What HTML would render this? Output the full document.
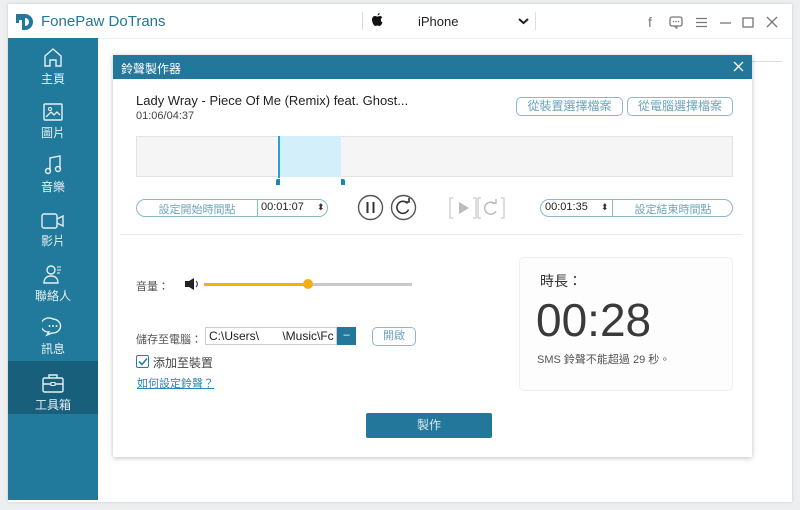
<!DOCTYPE html>
<html><head><meta charset="utf-8"><style>
*{margin:0;padding:0;box-sizing:border-box}
body{width:800px;height:510px;background:#eceef0;font-family:"Liberation Sans","Noto Sans CJK TC",sans-serif;position:relative;overflow:hidden;color:#333}
.a{position:absolute}
#win{left:8px;top:4px;width:784px;height:498px;background:#fff;box-shadow:0 0 3px rgba(0,0,0,.15)}
#side{left:8px;top:38px;width:90px;height:462px;background:#217a9b}
.nav{position:absolute;left:0;width:90px;text-align:center;color:#e6f0f4;font-size:12px}
.nav svg{display:block;margin:0 auto 2px}
#dlg{left:113px;top:55px;width:639px;height:402px;background:#fff;box-shadow:0 1px 5px rgba(0,0,0,.25)}
.btn{position:absolute;border:1.5px solid #8ab8cc;border-radius:5px;color:#6fa3bb;font-size:12px;text-align:center;background:#fff}
.tf{position:absolute;border:1.5px solid #8ab8cc;border-radius:9px;height:18px;font-size:12px;background:#fff}
</style></head><body>
<div id="win" class="a"></div>
<svg class="a" style="left:15px;top:12px" width="20" height="20" viewBox="0 0 20 20"><path d="M1 2h9a8 8 0 0 1 0 16H7V8H4v3H1z" fill="#23779a"/><path d="M10 6a4 4 0 0 1 0 8z" fill="#fff"/></svg>
<div class="a" style="left:41px;top:13px;font-size:15px;color:#23779a">FonePaw DoTrans</div>
<div class="a" style="left:362px;top:12px;width:1px;height:18px;background:#ddd"></div>
<svg class="a" style="left:372px;top:13px" width="11" height="13" viewBox="0 0 11 13"><path d="M8 3c-1 0-1.8.6-2.5.6S4 3 3 3C1.5 3 0 4.3 0 6.8 0 9.5 2 13 3.2 13c.8 0 1.2-.5 2.2-.5s1.3.5 2.2.5C8.8 13 10 10.6 10.5 9.5 9.4 9 8.8 8 8.8 6.8c0-1 .6-1.8 1.4-2.3C9.600 3.400 8.800 3 8 3zM7.600 0c.1 1-.8 2.400-2 2.300C5.500 1.200 6.500.1 7.600 0z" fill="#111"/></svg>
<div class="a" style="left:418px;top:14px;font-size:13px;color:#222">iPhone</div>
<svg class="a" style="left:518px;top:18px" width="11" height="7"><path d="M1 1l4.5 4 4.5-4" stroke="#222" stroke-width="2" fill="none"/></svg>
<div class="a" style="left:535px;top:12px;width:1px;height:18px;background:#ddd"></div>
<div class="a" style="left:648px;top:14px;font-size:14px;color:#777">f</div>
<svg class="a" style="left:669px;top:16px" width="14" height="13"><rect x="1" y="1" width="12" height="9" rx="2" stroke="#777" fill="none" stroke-width="1.3"/><path d="M5 10l3 2.5V10" stroke="#777" fill="none"/><circle cx="4.5" cy="5.5" r=".8" fill="#777"/><circle cx="7" cy="5.5" r=".8" fill="#777"/><circle cx="9.5" cy="5.5" r=".8" fill="#777"/></svg>
<svg class="a" style="left:695px;top:17px" width="13" height="11"><path d="M1 1.5h11M1 5.5h11M1 9.5h11" stroke="#777" stroke-width="1.3"/></svg>
<svg class="a" style="left:719px;top:17px" width="13" height="11"><path d="M1 6h11" stroke="#777" stroke-width="1.3"/></svg>
<svg class="a" style="left:742px;top:17px" width="12" height="11"><rect x="1" y="1" width="10" height="9" stroke="#777" fill="none" stroke-width="1.3"/></svg>
<svg class="a" style="left:766px;top:16px" width="12" height="12"><path d="M1 1l10 10M11 1L1 11" stroke="#777" stroke-width="1.3"/></svg>
<div class="a" style="left:98px;top:38px;width:694px;height:1px;background:#eee"></div>
<div class="a" style="left:752px;top:61px;width:30px;height:1px;background:#ddd"></div>
<div id="side" class="a">
 <div class="nav" style="top:8px"><svg width="22" height="22" viewBox="0 0 22 22"><path d="M3 10L11 3l8 7v10h-5v-6H8v6H3z" stroke="#e6f0f4" stroke-width="1.4" fill="none"/></svg>主頁</div>
 <div class="nav" style="top:64px"><svg width="22" height="20" viewBox="0 0 22 20"><rect x="2" y="2" width="18" height="16" rx="1" stroke="#e6f0f4" stroke-width="1.4" fill="none"/><path d="M4 15l5-5 3 3 3-3 3 3" stroke="#e6f0f4" fill="none" stroke-width="1.3"/><circle cx="8" cy="7" r="1.5" stroke="#e6f0f4" fill="none"/></svg>圖片</div>
 <div class="nav" style="top:116px"><svg width="22" height="22" viewBox="0 0 22 22"><path d="M8 17V4l10-2v13" stroke="#e6f0f4" stroke-width="1.4" fill="none"/><circle cx="6" cy="17" r="2.5" stroke="#e6f0f4" stroke-width="1.4" fill="none"/><circle cx="16" cy="15" r="2.5" stroke="#e6f0f4" stroke-width="1.4" fill="none"/></svg>音樂</div>
 <div class="nav" style="top:174px"><svg width="26" height="18" viewBox="0 0 26 18"><rect x="2" y="2" width="15" height="14" rx="2" stroke="#e6f0f4" stroke-width="1.4" fill="none"/><path d="M17 7l6-3v10l-6-3" stroke="#e6f0f4" stroke-width="1.4" fill="none"/></svg>影片</div>
 <div class="nav" style="top:225px"><svg width="22" height="22" viewBox="0 0 22 22"><circle cx="9" cy="7" r="4" stroke="#e6f0f4" stroke-width="1.4" fill="none"/><path d="M2 20c0-5 3-7 7-7s7 2 7 7z" stroke="#e6f0f4" stroke-width="1.4" fill="none"/><path d="M15 4h4M15 7h4M15 10h3" stroke="#e6f0f4"/></svg>聯絡人</div>
 <div class="nav" style="top:278px"><svg width="22" height="22" viewBox="0 0 22 22"><path d="M11 3a8 7 0 1 0-4 13l-2 3 5-2a8 7 0 0 0 1-14z" stroke="#e6f0f4" stroke-width="1.4" fill="none"/><circle cx="7.5" cy="10" r="1" fill="#e6f0f4"/><circle cx="11" cy="10" r="1" fill="#e6f0f4"/><circle cx="14.5" cy="10" r="1" fill="#e6f0f4"/></svg>訊息</div>
 <div class="a" style="left:0;top:323px;width:90px;height:53px;background:#185f7c"></div>
 <div class="nav" style="top:334px"><svg width="24" height="22" viewBox="0 0 24 22"><rect x="2" y="6" width="20" height="14" rx="1.5" stroke="#e6f0f4" stroke-width="1.4" fill="none"/><path d="M8 6V3h8v3M2 12h20" stroke="#e6f0f4" stroke-width="1.4" fill="none"/><rect x="10" y="10.5" width="4" height="3" fill="#185f7c" stroke="#e6f0f4"/></svg>工具箱</div>
</div>
<div id="dlg" class="a">
 <div class="a" style="left:0;top:0;width:639px;height:24px;background:#23779a"></div>
 <div class="a" style="left:8px;top:5px;color:#fff;font-size:12px">鈴聲製作器</div>
 <svg class="a" style="left:620px;top:6px" width="11" height="11"><path d="M1 1l9 9M10 1l-9 9" stroke="#fff" stroke-width="1.3"/></svg>
 <div class="a" style="left:23px;top:38px;font-size:13px;color:#222">Lady Wray - Piece Of Me (Remix) feat. Ghost...</div>
 <div class="a" style="left:23px;top:55px;font-size:11px;color:#444">01:06/04:37</div>
 <div class="btn" style="left:403px;top:42px;width:107px;height:19px;line-height:16px">從裝置選擇檔案</div>
 <div class="btn" style="left:514px;top:42px;width:106px;height:19px;line-height:16px">從電腦選擇檔案</div>
 <div class="a" style="left:23px;top:81px;width:597px;height:41px;background:#f5f5f5;border:1px solid #e2e2e2"></div>
 <div class="a" style="left:166px;top:81px;width:62px;height:41px;background:#d3effa"></div>
 <div class="a" style="left:165px;top:81px;width:2px;height:42px;background:#2aa2d0"></div>
 <div class="a" style="left:163px;top:124px;width:4px;height:6px;background:#1a86b8;border-radius:2px 0 0 0"></div>
 <div class="a" style="left:228px;top:124px;width:4px;height:6px;background:#1a86b8;border-radius:0 2px 0 0"></div>
 <div class="tf" style="left:23px;top:144px;width:192px"><span class="a" style="left:0;width:120px;text-align:center;top:1px;color:#6fa3bb;font-size:11px">設定開始時間點</span><span class="a" style="left:120px;top:-1px;width:1px;height:17px;background:#8ab8cc"></span><span class="a" style="left:124px;top:1px;font-size:11px;color:#222">00:01:07</span><span class="a" style="left:180px;top:2px;font-size:9px;color:#333">⬍</span></div>
 <svg class="a" style="left:244px;top:139px" width="60" height="27"><circle cx="13.5" cy="13.5" r="12" stroke="#555" stroke-width="1.4" fill="#fff"/><path d="M10.5 8v11M16.5 8v11" stroke="#333" stroke-width="2"/><circle cx="46.5" cy="13.5" r="12" stroke="#555" stroke-width="1.4" fill="#fff"/><path d="M50.5 9.5a6 6 0 1 0 1 6" stroke="#333" stroke-width="1.6" fill="none"/><path d="M48 8h4v-4" stroke="#333" stroke-width="1.6" fill="none"/></svg>
 <svg class="a" style="left:336px;top:141px" width="65" height="24"><path d="M4 2H1v20h3M24 2h3v20h-3M32 2h-3v20h3M52 2h3v20h-3" stroke="#ccc" stroke-width="1.3" fill="none"/><path d="M10 6v12l10-6z" fill="#bbb"/><path d="M46 8a6 6 0 1 0 1 7" stroke="#bbb" stroke-width="1.5" fill="none"/><path d="M43 7h4v-4" stroke="#bbb" stroke-width="1.5" fill="none"/></svg>
 <div class="tf" style="left:427px;top:144px;width:193px"><span class="a" style="left:4px;top:1px;font-size:11px;color:#222">00:01:35</span><span class="a" style="left:60px;top:2px;font-size:9px;color:#333">⬍</span><span class="a" style="left:71px;top:-1px;width:1px;height:17px;background:#8ab8cc"></span><span class="a" style="left:72px;width:120px;text-align:center;top:1px;color:#6fa3bb;font-size:11px">設定結束時間點</span></div>
 <div class="a" style="left:7px;top:179px;width:622px;height:1px;background:#e8e8e8"></div>
 <div class="a" style="left:23px;top:223px;font-size:11px;color:#555">音量：</div>
 <svg class="a" style="left:71px;top:222px" width="16" height="14"><path d="M1 4h4l5-3v12l-5-3H1z" fill="#222"/><path d="M12 4a4 4 0 0 1 0 6" stroke="#222" fill="none"/></svg>
 <div class="a" style="left:91px;top:228px;width:106px;height:3px;background:#f4ae16"></div>
 <div class="a" style="left:197px;top:228px;width:102px;height:3px;background:#c9c9c9"></div>
 <div class="a" style="left:190px;top:224px;width:10px;height:10px;border-radius:5px;background:#f4ae16"></div>
 <div class="a" style="left:23px;top:276px;font-size:11px;color:#555">儲存至電腦：</div>
 <div class="a" style="left:92px;top:272px;width:132px;height:18px;border:1px solid #ccc;font-size:12px;padding:1px 3px;overflow:hidden;white-space:nowrap;color:#222">C:\Users\ &nbsp; &nbsp; &nbsp; \Music\Fc</div>
 <div class="a" style="left:224px;top:272px;width:19px;height:18px;background:#23779a;color:#fff;font-size:11px;text-align:center;line-height:16px">–</div>
 <div class="btn" style="left:259px;top:272px;width:44px;height:19px;line-height:16px;font-size:11px">開啟</div>
 <div class="a" style="left:23px;top:300px;width:13px;height:13px;border:1.5px solid #2a7ca0;border-radius:2px"></div>
 <svg class="a" style="left:25px;top:302px" width="10" height="9"><path d="M1 4.5l3 3 5-6" stroke="#2a7ca0" stroke-width="1.6" fill="none"/></svg>
 <div class="a" style="left:40px;top:299px;font-size:12px;color:#444">添加至裝置</div>
 <div class="a" style="left:24px;top:320px;font-size:11px;color:#2a86b0;text-decoration:underline">如何設定鈴聲？</div>
 <div class="a" style="left:253px;top:358px;width:126px;height:25px;background:#23779a;border-radius:2px;color:#d8e8ef;font-size:12px;text-align:center;line-height:25px">製作</div>
 <div class="a" style="left:406px;top:202px;width:214px;height:134px;border:1px solid #eee;border-radius:5px;background:#fdfdfd"></div>
 <div class="a" style="left:427px;top:216px;font-size:14px;color:#333">時長：</div>
 <div class="a" style="left:423px;top:238px;font-size:46px;color:#3a3a3a;letter-spacing:0px">00:28</div>
 <div class="a" style="left:424px;top:296px;font-size:11px;color:#555">SMS 鈴聲不能超過 29 秒。</div>
</div>
</body></html>
